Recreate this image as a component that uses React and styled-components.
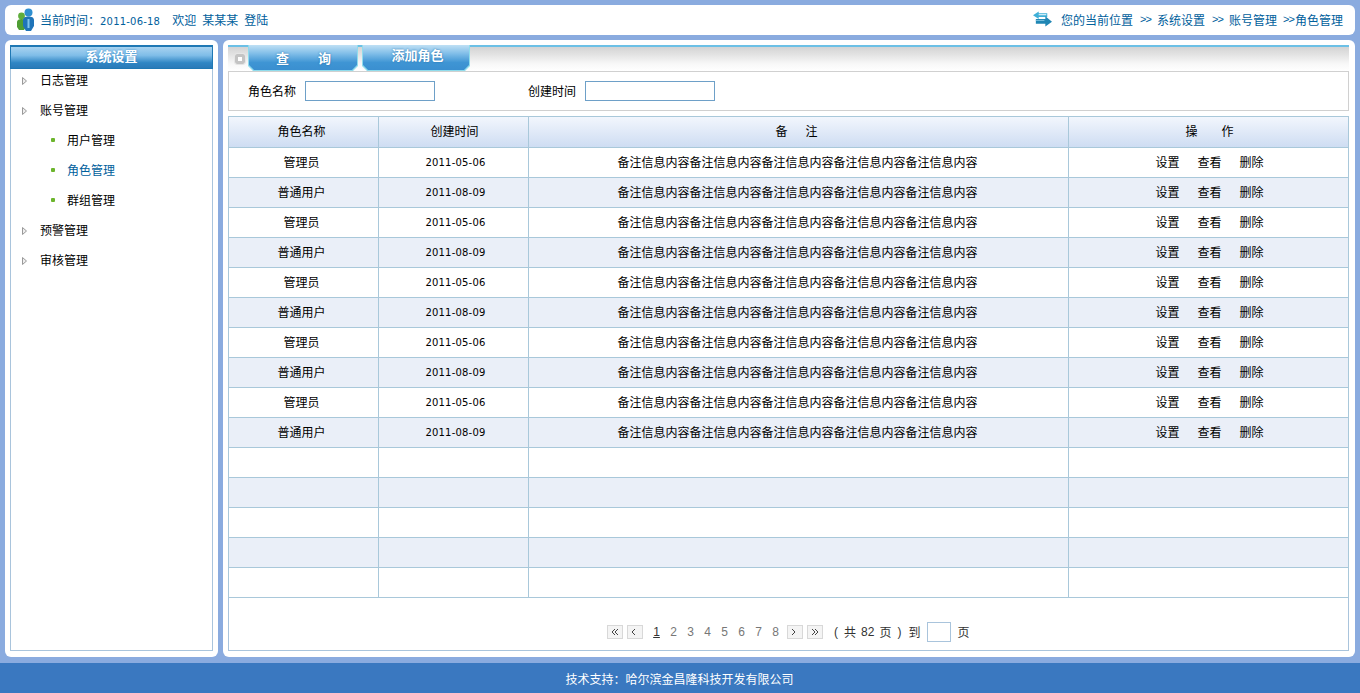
import React from "react";
import styled, { createGlobalStyle } from "styled-components";

const GlobalStyle = createGlobalStyle`
  html, body {
    margin: 0;
    padding: 0;
    background-color: #8aabdf;
    font-family: "Liberation Sans", "Noto Sans CJK SC", sans-serif;
    font-size: 12px;
    color: #000;
  }
`;

const Page = styled.div`
  width: 1360px;
  height: 693px;
  overflow: hidden;
  display: flex;
  flex-direction: column;
  box-sizing: border-box;
  padding-top: 5px;
`;

const TopBar = styled.div`
  height: 30px;
  margin: 0 5px;
  box-sizing: border-box;
  padding-bottom: 2px;
  background-color: #fff;
  border-radius: 6px;
  display: flex;
  align-items: center;
  justify-content: space-between;
  color: #00609c;
`;

const TopGroup = styled.div`
  display: flex;
  align-items: center;
  margin-right: ${(p) => p.$right || 0}px;
`;

const TopText = styled.span`
  margin-left: ${(p) => p.$left || 0}px;
  white-space: nowrap;
`;

const Crumb = styled.span`
  margin: 0 6px 0 ${(p) => p.$left ?? 7}px;
  font-size: 11px;
  letter-spacing: -1px;
  width: 11px;
  white-space: nowrap;
`;

const DateText = styled.span`
  font-family: "DejaVu Sans", sans-serif;
  font-size: 10px;
  letter-spacing: 0.2px;
`;

const Body = styled.div`
  display: flex;
  gap: 5px;
  height: 617px;
  margin: 5px 5px 6px;
`;

const SidePanel = styled.div`
  width: 213px;
  box-sizing: border-box;
  padding: 5px 5px 6px;
  background-color: #fff;
  border-radius: 6px;
`;

const SideInner = styled.div`
  height: 100%;
  box-sizing: border-box;
  border: 1px solid #a9c4dc;
  border-top: none;
`;

const SideTitle = styled.div`
  height: 24px;
  margin: 0 -1px;
  box-sizing: border-box;
  border: 1px solid #1f78b4;
  border-top-width: 2px;
  background: linear-gradient(#a9d3f0 0%, #7fbde8 40%, #2f86c4 75%, #2a7ab8 100%);
  color: #fff;
  font-weight: bold;
  font-size: 13px;
  text-align: center;
  line-height: 20px;
  text-shadow: 0 0 2px #2f86c4;
`;

const Menu = styled.ul`
  list-style: none;
  margin: 0;
  padding: 0;
  display: flex;
  flex-direction: column;
  gap: 6px;
`;

const MenuItem = styled.li`
  height: 24px;
  box-sizing: border-box;
  padding-bottom: 3px;
  display: flex;
  align-items: center;
  padding-left: ${(p) => (p.$sub ? 40 : 11)}px;
  color: ${(p) => (p.$active ? "#00609c" : "#000")};
`;

const Bullet = styled.span`
  width: 4px;
  height: 4px;
  border-radius: 1px;
  background-color: #6cb52d;
  margin-right: 12px;
`;

const MainPanel = styled.div`
  width: 1132px;
  box-sizing: border-box;
  padding: 5px 6px 6px 5px;
  background-color: #fff;
  border-radius: 6px;
`;

const MainInner = styled.div`
  height: 100%;
  display: flex;
  flex-direction: column;
`;

const ToolBar = styled.div`
  height: 26px;
  flex: none;
  display: flex;
  align-items: flex-start;
  box-sizing: border-box;
  border-top: 2px solid #6cc0e6;
  background: linear-gradient(#d4d4d4 0%, #e2e2e2 30%, #f8f8f8 70%, #fff 100%);
`;

const CloseBox = styled.span`
  width: 10px;
  height: 10px;
  margin: 7px 3px 0 7px;
  box-sizing: border-box;
  background-color: #fff;
  background-clip: padding-box;
  border: 3px solid #c4c4c4;
  outline: 1px solid #e6e6e6;
  border-radius: 2px;
`;

const Tab = styled.div`
  width: ${(p) => p.$width}px;
  height: 26px;
  margin-top: -2px;
  margin-right: 4px;
  box-sizing: border-box;
  padding: 0 1px 1px;
  background-color: #8fdcec;
  clip-path: polygon(0 0, 100% 0, 100% calc(100% - 5px), calc(100% - 5px) 100%, 5px 100%, 0 calc(100% - 5px));
`;

const TabFace = styled.div`
  height: 100%;
  box-sizing: border-box;
  clip-path: polygon(0 0, 100% 0, 100% calc(100% - 5px), calc(100% - 5px) 100%, 5px 100%, 0 calc(100% - 5px));
  background: linear-gradient(#bfe0f5 0%, #7fbde8 35%, #3f95d4 70%, #3a8fd0 100%);
  color: #fff;
  font-weight: bold;
  font-size: 13px;
  white-space: nowrap;
  text-align: ${(p) => (p.$spread ? "left" : "center")};
  line-height: ${(p) => (p.$spread ? 28 : 22)}px;
  letter-spacing: ${(p) => p.$spread || 0}px;
  padding-left: ${(p) => (p.$spread ? 27 : 3)}px;
  text-shadow: 0 0 2px #1f6ca8;
`;

const SearchBox = styled.div`
  height: 40px;
  flex: none;
  display: flex;
  align-items: center;
  box-sizing: border-box;
  border: 1px solid #d0d0d0;
  padding-left: 19px;
  margin-bottom: 5px;
`;

const SearchLabel = styled.span`
  width: 57px;
  padding-bottom: 2px;
`;

const SearchInput = styled.input`
  width: 130px;
  height: 20px;
  box-sizing: border-box;
  border: 1px solid #6ea0c8;
  outline: none;
  margin-right: 93px;
  padding: 0;
`;

const Table = styled.table`
  width: 1121px;
  table-layout: fixed;
  border-collapse: collapse;
  flex: none;

  th, td {
    border: 1px solid #a9c8da;
    padding: 0 0 3px;
    text-align: center;
  }

  th:nth-child(1), td:nth-child(1) {
    padding-right: 4px;
  }

  th:nth-child(2) {
    padding-left: 2px;
  }

  td:nth-child(2) {
    padding: 1px 0 2px 4px;
  }

  td:nth-child(3) {
    padding-right: 2px;
  }

  td:nth-child(4) {
    padding-left: 2px;
  }
`;

const HeadRow = styled.tr`
  height: 31px;
  background: linear-gradient(#f2f6fd, #cddcf2);
`;

const HeadCell = styled.th`
  font-weight: normal;
  letter-spacing: ${(p) => p.$spread || 0}px;
  text-indent: ${(p) => p.$indent || 0}px;
`;

const Row = styled.tr`
  height: 30px;
  background-color: ${(p) => (p.$alt ? "#eaeff8" : "#fff")};
`;

const Action = styled.span`
  margin: 0 9px;
`;

const Pager = styled.div`
  flex: 1;
  display: flex;
  align-items: center;
  box-sizing: border-box;
  border: 1px solid #a9c4dc;
  border-top: none;
  padding: 15px 0 0 378px;
  color: #333;
`;

const PageBtn = styled.span`
  width: 16px;
  height: 14px;
  box-sizing: border-box;
  border: 1px solid #d8d8d8;
  background-color: #f4f4f4;
  margin-left: ${(p) => p.$left ?? 0}px;
  margin-right: 4px;
  display: flex;
  align-items: center;
  justify-content: center;
`;

const PageNum = styled.span`
  width: 17px;
  text-align: center;
  position: relative;
  left: 1px;
  color: ${(p) => (p.$current ? "#333" : "#777")};
  text-decoration: ${(p) => (p.$current ? "underline" : "none")};
`;

const PageText = styled.span`
  margin-left: ${(p) => p.$left || 0}px;
  white-space: nowrap;
`;

const PageInput = styled.input`
  width: 24px;
  height: 20px;
  box-sizing: border-box;
  border: 1px solid #a9c4dc;
  outline: none;
  padding: 0;
  margin: 0 6px 0 7px;
`;

const Footer = styled.div`
  height: 30px;
  flex: none;
  background-color: #3a78c0;
  color: #fff;
  text-align: center;
  line-height: 35px;
  padding-right: 1px;
`;

const UserIcon = () => (
  <svg width="18" height="24" viewBox="0 0 18 24" style={{ margin: "2px 5px 0 12px" }}>
    <circle cx="4.5" cy="8" r="3.4" fill="#5fae3c" />
    <path d="M0 14c0-2 2-3 4.500-3s4.500 1 4.500 3v5l-2 3H2l-2-3z" fill="#4f9e34" />
    <circle cx="11.500" cy="4.500" r="4" fill="#2f8fd0" />
    <path d="M6 12c0-2.500 2.500-3.500 5.500-3.500s5.500 1 5.500 3.500v6l-3 5H9l-3-5z" fill="#1f74b8" />
    <rect x="10.500" y="11" width="2" height="9" fill="#7fc4ec" />
  </svg>
);

const SwapIcon = () => (
  <svg width="19" height="16" viewBox="0 0 20 16" style={{ marginRight: 9 }}>
    <path d="M0 4L6 0v2h9v4H6v2z" fill="#3fb0d8" />
    <path d="M6 3.500h8" stroke="#fff" fill="none" />
    <path d="M20 11l-7-6v3H3v5h10v3z" fill="#1f86b4" />
    <path d="M3 9.500h9" stroke="#7fc4e0" fill="none" />
  </svg>
);

const TreeArrow = () => (
  <svg width="5" height="8" viewBox="0 0 5 8" style={{ marginRight: 13, marginTop: 3 }}>
    <path d="M.5.5L4.500 4L.5 7.500z" fill="#eee" stroke="#999" />
  </svg>
);

const Chevron = ({ dir, count }) => {
  const pts = dir === "left" ? ["M4 1L1 4l3 3", "M7 1L4 4l3 3"] : ["M1 1l3 3-3 3", "M4 1l3 3-3 3"];
  return (
    <svg width="8" height="8" viewBox="0 0 8 8">
      {pts.slice(0, count).map((d) => (
        <path key={d} d={d} fill="none" stroke="#444" />
      ))}
    </svg>
  );
};

const roles = [
  ["管理员", "2011-05-06"],
  ["普通用户", "2011-08-09"],
];
const note = "备注信息内容备注信息内容备注信息内容备注信息内容备注信息内容";

const App = () => {
  const rows = Array.from({ length: 15 }, (_, i) => i);

  return (
    <Page>
      <GlobalStyle />
      <TopBar>
        <TopGroup>
          <UserIcon />
          <TopText>当前时间：<DateText>2011-06-18</DateText></TopText>
          <TopText $left={12}>欢迎</TopText>
          <TopText $left={6}>某某某</TopText>
          <TopText $left={6}>登陆</TopText>
        </TopGroup>
        <TopGroup $right={12}>
          <SwapIcon />
          <TopText>您的当前位置</TopText>
          <Crumb>&gt;&gt;</Crumb>
          <TopText>系统设置</TopText>
          <Crumb>&gt;&gt;</Crumb>
          <TopText>账号管理</TopText>
          <Crumb $left={6}>&gt;&gt;</Crumb>
          <TopText $left={-5}>角色管理</TopText>
        </TopGroup>
      </TopBar>
      <Body>
        <SidePanel>
          <SideInner>
            <SideTitle>系统设置</SideTitle>
            <Menu>
              <MenuItem><TreeArrow />日志管理</MenuItem>
              <MenuItem><TreeArrow />账号管理</MenuItem>
              <MenuItem $sub><Bullet />用户管理</MenuItem>
              <MenuItem $sub $active><Bullet />角色管理</MenuItem>
              <MenuItem $sub><Bullet />群组管理</MenuItem>
              <MenuItem><TreeArrow />预警管理</MenuItem>
              <MenuItem><TreeArrow />审核管理</MenuItem>
            </Menu>
          </SideInner>
        </SidePanel>
        <MainPanel>
          <MainInner>
            <ToolBar>
              <CloseBox />
              <Tab $width={110}><TabFace $spread={29}>查询</TabFace></Tab>
              <Tab $width={108}><TabFace>添加角色</TabFace></Tab>
            </ToolBar>
            <SearchBox>
              <SearchLabel>角色名称</SearchLabel>
              <SearchInput />
              <SearchLabel>创建时间</SearchLabel>
              <SearchInput />
            </SearchBox>
            <Table>
              <colgroup>
                <col width="150" />
                <col width="150" />
                <col width="540" />
                <col width="280" />
              </colgroup>
              <thead>
                <HeadRow>
                  <HeadCell>角色名称</HeadCell>
                  <HeadCell>创建时间</HeadCell>
                  <HeadCell $spread={18} $indent={14}>备注</HeadCell>
                  <HeadCell $spread={24} $indent={26}>操作</HeadCell>
                </HeadRow>
              </thead>
              <tbody>
                {rows.map((i) => (
                  <Row key={i} $alt={i % 2 === 1}>
                    {i < 10 ? (
                      <>
                        <td>{roles[i % 2][0]}</td>
                        <td><DateText>{roles[i % 2][1]}</DateText></td>
                        <td>{note}</td>
                        <td>
                          <Action>设置</Action>
                          <Action>查看</Action>
                          <Action>删除</Action>
                        </td>
                      </>
                    ) : (
                      <>
                        <td />
                        <td />
                        <td />
                        <td />
                      </>
                    )}
                  </Row>
                ))}
              </tbody>
            </Table>
            <Pager>
              <PageBtn><Chevron dir="left" count={2} /></PageBtn>
              <PageBtn><Chevron dir="left" count={1} /></PageBtn>
              {[1, 2, 3, 4, 5, 6, 7, 8].map((n) => (
                <PageNum key={n} $current={n === 1}>{n}</PageNum>
              ))}
              <PageBtn $left={4}><Chevron dir="right" count={1} /></PageBtn>
              <PageBtn><Chevron dir="right" count={2} /></PageBtn>
              <PageText $left={7}>(</PageText>
              <PageText $left={6}>共</PageText>
              <PageText $left={5}>82</PageText>
              <PageText $left={5}>页</PageText>
              <PageText $left={6}>)</PageText>
              <PageText $left={7}>到</PageText>
              <PageInput />
              <PageText>页</PageText>
            </Pager>
          </MainInner>
        </MainPanel>
      </Body>
      <Footer>技术支持：哈尔滨金昌隆科技开发有限公司</Footer>
    </Page>
  );
};

export default App;
